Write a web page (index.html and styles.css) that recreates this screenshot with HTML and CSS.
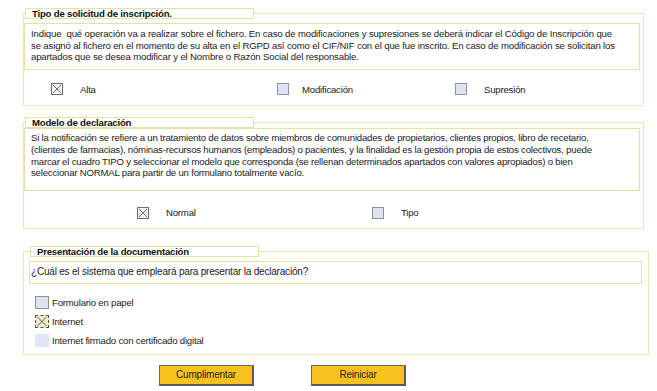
FILE: index.html
```html
<!DOCTYPE html>
<html lang="es">
<head>
    <meta charset="UTF-8">
    <title>Declaración de ficheros</title>
    <link rel="stylesheet" href="styles.css">
</head>
<body>
    <form class="form">
        <fieldset class="grupo">
            <legend class="titulo">Tipo de solicitud de inscripción.</legend>
            <div class="ayuda">Indique &nbsp;qué operación va a realizar sobre el fichero. En caso de modificaciones y supresiones se deberá indicar el Código de Inscripción que<br>se asignó al fichero en el momento de su alta en el RGPD así como el CIF/NIF con el que fue inscrito. En caso de modificación se solicitan los<br>apartados que se desea modificar y el Nombre o Razón Social del responsable.</div>
            <div class="opciones tipo-sol">
                <label class="opcion"><span class="caja marcada"><svg viewBox="0 0 12 12"><path d="M1 1L11 11M11 1L1 11"/></svg></span>Alta</label>
                <label class="opcion op-mod"><span class="caja"></span>Modificación</label>
                <label class="opcion"><span class="caja"></span>Supresión</label>
            </div>
        </fieldset>

        <fieldset class="grupo modelo">
            <legend class="titulo">Modelo de declaración</legend>
            <div class="ayuda">Si la notificación se refiere a un tratamiento de datos sobre miembros de comunidades de propietarios, clientes propios, libro de recetario,<br>(clientes de farmacias), nóminas-recursos humanos (empleados) o pacientes, y la finalidad es la gestión propia de estos colectivos, puede<br>marcar el cuadro TIPO y seleccionar el modelo que corresponda (se rellenan determinados apartados con valores apropiados) o bien<br>seleccionar NORMAL para partir de un formulario totalmente vacío.</div>
            <div class="opciones tipo-mod">
                <label class="opcion"><span class="caja marcada"><svg viewBox="0 0 12 12"><path d="M1 1L11 11M11 1L1 11"/></svg></span>Normal</label>
                <label class="opcion"><span class="caja"></span>Tipo</label>
            </div>
        </fieldset>

        <fieldset class="grupo presenta">
            <legend class="titulo">Presentación de la documentación</legend>
            <div class="ayuda pregunta">¿Cuál es el sistema que empleará para presentar la declaración?</div>
            <div class="lista">
                <label class="fila"><span class="caja"></span>Formulario en papel</label>
                <label class="fila"><span class="caja marcada internet"><svg viewBox="0 0 12 12"><path d="M1 1L11 11M11 1L1 11"/></svg></span>Internet</label>
                <label class="fila"><span class="caja inactiva"></span>Internet firmado con certificado digital</label>
            </div>
        </fieldset>

        <div class="botones">
            <input type="button" class="boton" value="Cumplimentar" />
            <input type="button" class="boton" value="Reiniciar" />
        </div>
    </form>
</body>
</html>
```

FILE: styles.css
```css
body {
    margin: 0;
    background: #fff;
    font-family: "Liberation Sans", Arial, sans-serif;
    font-size: 9.6px;
    letter-spacing: -0.2px;
    color: #222;
}
.form {
    padding: 8px 0 0 23px;
}
.grupo {
    box-sizing: border-box;
    width: 621px;
    margin: 0;
    padding: 0;
    border: 1px solid #ebe7b4;
    min-width: 0;
}
.titulo {
    box-sizing: border-box;
    width: 229px;
    margin-left: 1px;
    padding: 0 6px;
    border: 1px solid #e6e2a6;
    line-height: 9px;
    font-weight: bold;
    color: #111;
}
.ayuda {
    margin: 4px 3px 0 0;
    padding: 4px 6px 6px;
    border: 1px solid #e6e2a6;
    line-height: 11.7px;
    white-space: nowrap;
}
.grupo:first-child .ayuda {
    letter-spacing: -0.15px;
}
.opciones {
    display: grid;
    align-items: center;
}
.tipo-sol {
    grid-template-columns: 226px 178px auto;
    padding: 13px 0 10px 27px;
}
.tipo-mod {
    grid-template-columns: 235px auto;
    padding: 16px 0 9px 113px;
}
.opcion {
    display: flex;
    align-items: center;
    gap: 17px;
}
.op-mod {
    gap: 13px;
}
.caja {
    box-sizing: border-box;
    display: inline-block;
    width: 12px;
    height: 12px;
    border: 1px solid #8e8e9c;
    background: #dde3f3;
    flex: none;
}
.caja svg {
    display: block;
    width: 100%;
    height: 100%;
}
.caja svg path {
    stroke: #555;
    stroke-width: 1;
    fill: none;
}
.marcada {
    background: #f2f3f8;
    border-color: #6f6f78;
}
.internet {
    background: #efe9cf;
    border: 1px dashed #55503a;
}
.inactiva {
    border-color: #dde6f4;
    background: #dfe7f5;
}
.modelo {
    margin-top: 11px;
}
.modelo .ayuda {
    margin-top: 0;
    padding: 3px 6px 11px;
}
.presenta {
    width: 626px;
    margin-top: 17px;
}
.presenta .titulo {
    margin-left: 6px;
}
.pregunta {
    margin: 4px 6px 0 5px;
    padding: 4px 1px 5px;
    font-size: 10px;
}
.lista {
    display: flex;
    flex-direction: column;
    gap: 6px;
    padding: 12px 0 7px 11px;
}
.fila {
    display: flex;
    align-items: center;
    gap: 3px;
}
.lista .caja {
    width: 14px;
    height: 13px;
}
.botones {
    display: flex;
    gap: 57px;
    padding: 10px 0 0 136px;
}
.boton {
    box-sizing: border-box;
    width: 95px;
    height: 21px;
    border: 1px solid #6b6b6b;
    border-right: 2px solid #5a5a5a;
    border-bottom: 2px solid #5a5a5a;
    background: #f7c21e;
    font-family: "Liberation Sans", Arial, sans-serif;
    font-size: 10px;
    letter-spacing: -0.2px;
    color: #222;
    padding: 0;
}
```
